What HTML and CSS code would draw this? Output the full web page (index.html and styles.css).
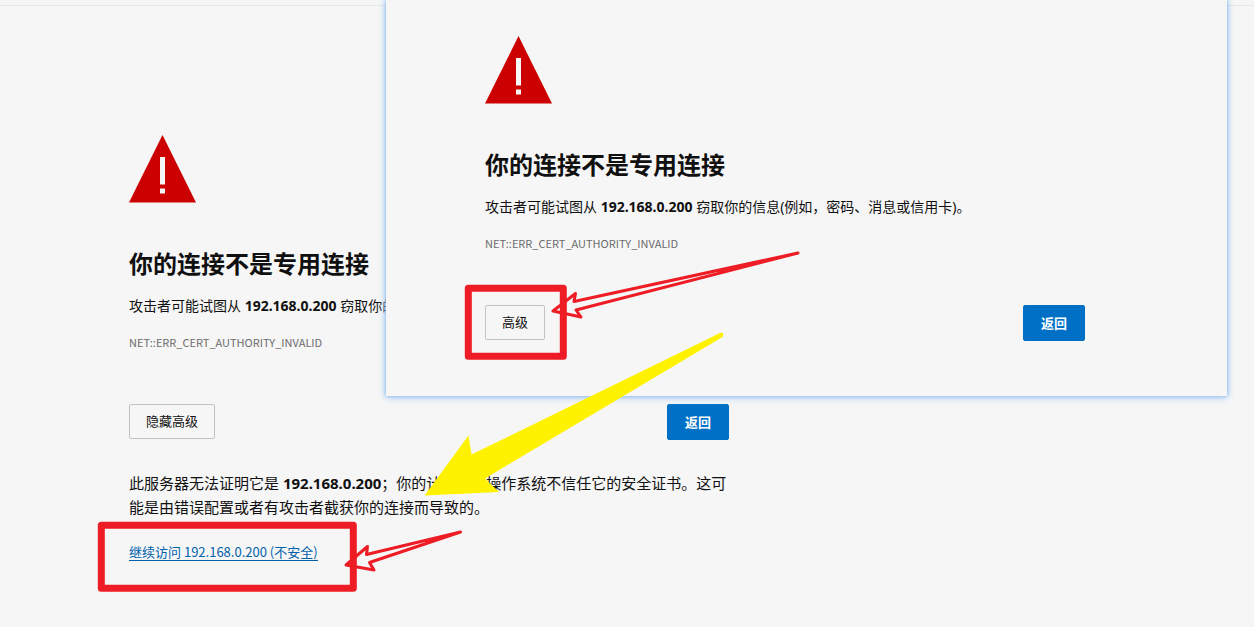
FILE: index.html
```
<!DOCTYPE html>
<html lang="zh-CN">
<head>
  <meta charset="UTF-8" />
  <meta name="viewport" content="width=device-width, initial-scale=1" />
  <title>隐私错误</title>
  <link rel="stylesheet" href="styles.css">
</head>
<body>
  <main class="page">
    <div class="interstitial">
      <svg class="warning-icon" viewBox="0 0 67 68" aria-hidden="true">
        <path d="M33.5 0L67 67.500H0z" fill="#c00"/>
        <path d="M31 22h5v27.500h-5zM31 53.500h5v5h-5z" fill="#f6f6f6"/>
      </svg>
      <h1>你的连接不是专用连接</h1>
      <p class="message">攻击者可能试图从 <strong>192.168.0.200</strong> 窃取你的信息(例如，密码、消息或信用卡)。</p>
      <div class="error-code">NET::ERR_CERT_AUTHORITY_INVALID</div>
      <div class="buttons">
        <button type="button" class="btn">隐藏高级</button>
        <button type="button" class="btn btn-primary">返回</button>
      </div>
      <div class="details">
        <p>此服务器无法证明它是 <strong>192.168.0.200</strong>；你的计算机的操作系统不信任它的安全证书。这可能是由错误配置或者有攻击者截获你的连接而导致的。</p>
        <a href="#" class="proceed-link">继续访问 192.168.0.200 (不安全)</a>
      </div>
    </div>
  </main>

  <section class="popup">
    <div class="interstitial">
      <svg class="warning-icon" viewBox="0 0 67 68" aria-hidden="true">
        <path d="M33.5 0L67 67.500H0z" fill="#c00"/>
        <path d="M31 22h5v27.500h-5zM31 53.500h5v5h-5z" fill="#f6f6f6"/>
      </svg>
      <h1>你的连接不是专用连接</h1>
      <p class="message">攻击者可能试图从 <strong>192.168.0.200</strong> 窃取你的信息(例如，密码、消息或信用卡)。</p>
      <div class="error-code">NET::ERR_CERT_AUTHORITY_INVALID</div>
      <div class="buttons">
        <button type="button" class="btn">高级</button>
        <button type="button" class="btn btn-primary">返回</button>
      </div>
    </div>
  </section>

  <!-- boxes and arrows drawn over both windows -->
  <svg class="marks" width="800" height="600" viewBox="0 0 800 600" aria-hidden="true">
    <g class="mark-box">
      <rect x="468.300" y="288.300" width="95" height="68"/>
      <rect x="101.300" y="525.300" width="252" height="63"/>
    </g>
    <g class="mark-arrow">
      <path d="M798 253L574 301.500L575.500 293.500L553 311L581 317L576 310z"/>
      <path d="M460.500 532L366.500 554.500L367.500 546.500L346 565L374 570L369.500 562.500z"/>
    </g>
    <path class="mark-fill" d="M720 333L471.500 454.500L468.500 435.500L424.500 495.500L499 492L485 478.500L722.500 337Q725 332 720 333z"/>
  </svg>
</body>
</html>
```
FILE: styles.css
```
* {
  box-sizing: border-box;
}
body {
  margin: 0;
  min-height: 100vh;
  position: relative;
  overflow-x: hidden;
  background-color: #f6f6f6;
  color: #101010;
  font-family: "Noto Sans", "Noto Sans CJK SC", sans-serif;
  font-size: 14px;
  line-height: 20px;
}
.page {
  margin-top: 5px;
  padding: 129px 24px 24px 129px;
  border-top: 1px solid #e8e8e8;
}
body::before {
  content: "";
  display: table;
}
.interstitial {
  max-width: 600px;
}
.warning-icon {
  display: block;
  width: 67px;
  height: 68px;
}
h1 {
  margin: 45px 0 16px;
  font-size: 24px;
  line-height: 32px;
  font-weight: 700;
}
.message {
  margin: 0 0 18px;
}
.error-code {
  color: #6b6b6b;
  font-family: "Noto Sans CJK SC", sans-serif;
  font-size: 11px;
  line-height: 16px;
}
.buttons {
  display: flex;
  justify-content: space-between;
  align-items: flex-start;
  margin-top: 54px;
}
.btn {
  height: 35px;
  padding: 0 16px 2px;
  border: 1px solid #c3c3c3;
  border-radius: 2px;
  background-color: transparent;
  color: #101010;
  font-family: inherit;
  font-size: 13px;
  cursor: pointer;
}
.btn-primary {
  height: 36px;
  padding: 0 17px 2px;
  border-color: #0070c6;
  background-color: #0070c6;
  color: #fff;
  font-weight: 700;
}
.details {
  margin-top: 31px;
  font-size: 15px;
  line-height: 24px;
}
.details p {
  margin: 0 0 24px;
}
.proceed-link {
  display: block;
  width: fit-content;
  border-bottom: 1px solid #0061ab;
  color: #0061ab;
  font-family: "Noto Sans CJK SC", sans-serif;
  font-size: 13px;
  line-height: 17px;
  text-decoration: none;
}
.popup {
  position: absolute;
  top: 0;
  left: 386px;
  width: 841px;
  padding: 36px 24px 55px 99px;
  background-color: #f6f6f6;
  box-shadow: 0 0 4px #7db4f2, 0 1px 8px #a9ccf5;
}
.marks {
  position: absolute;
  top: 0;
  left: 0;
  pointer-events: none;
}
.mark-box {
  fill: none;
  stroke: #ee1c24;
  stroke-width: 7;
  stroke-linejoin: round;
}
.mark-arrow {
  fill: none;
  stroke: #ee1c24;
  stroke-width: 3;
  stroke-linejoin: round;
}
.mark-fill {
  fill: #fff200;
}
```
